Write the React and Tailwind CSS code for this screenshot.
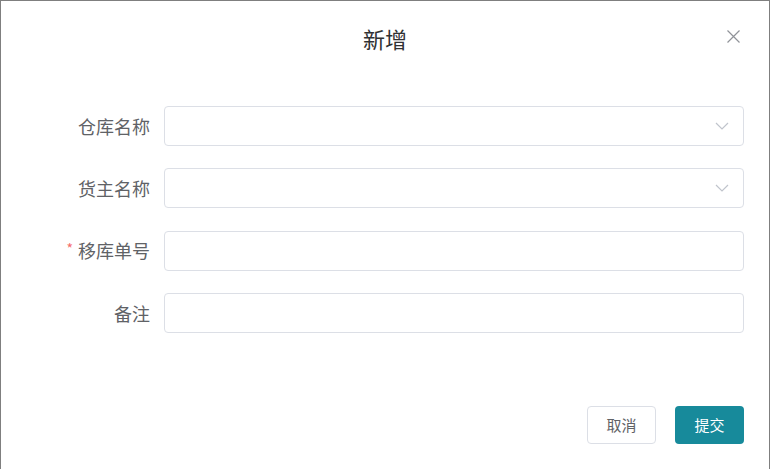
import React from "react";

const font = { fontFamily: '"Noto Sans CJK SC", "Noto Sans", sans-serif' };

function Chevron() {
  return (
    <svg width="14" height="8" viewBox="0 0 14 8" fill="none" className="shrink-0">
      <path d="M1 1 L7 7 L13 1" stroke="#c0c4cc" strokeWidth="1.2" />
    </svg>
  );
}

function Row({ label, required, select }) {
  return (
    <div className="flex items-center h-[40px]">
      <div className="w-[163px] pr-[14px] flex justify-end items-center text-[18px] text-[#606266]">
        {required && <span className="text-[#f56c6c] text-[14px] mr-[5px] mt-[-4px]">*</span>}
        <span>{label}</span>
      </div>
      <div className="w-[580px] h-[40px] border border-[#dcdfe6] rounded-[4px] bg-white flex items-center justify-end pr-[14px]">
        {select && <Chevron />}
      </div>
    </div>
  );
}

export default function App() {
  return (
    <div
      className="w-[770px] h-[469px] bg-white border-t border-l border-r border-[#7f7f7f] flex flex-col overflow-hidden"
      style={font}
    >
      <div className="relative h-[80px] flex items-start justify-center pt-[21px]">
        <span className="text-[22px] text-[#303133] leading-[32px]">新增</span>
        <svg
          className="absolute right-[29px] top-[29px]"
          width="13"
          height="13"
          viewBox="0 0 13 13"
          fill="none"
        >
          <path d="M0.5 0.5 L12.5 12.5 M12.5 0.5 L0.5 12.5" stroke="#909399" strokeWidth="1.2" />
        </svg>
      </div>
      <div className="flex flex-col gap-[22.4px] pt-[25px]">
        <Row label="仓库名称" select />
        <Row label="货主名称" select />
        <Row label="移库单号" required />
        <Row label="备注" />
      </div>
      <div className="flex justify-end gap-[19px] pr-[25px] mt-[73px]">
        <button className="w-[69px] h-[38px] border border-[#dcdfe6] rounded-[4px] bg-white text-[15px] text-[#606266]">
          取消
        </button>
        <button className="w-[69px] h-[38px] rounded-[4px] bg-[#178a9b] text-[15px] text-white">
          提交
        </button>
      </div>
    </div>
  );
}
